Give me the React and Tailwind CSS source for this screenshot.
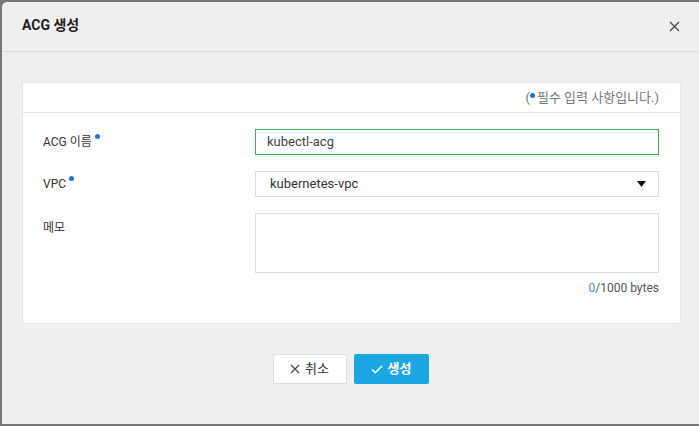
const Dot = () => (
  <span className="inline-block w-[5px] h-[5px] rounded-full bg-[#1f75cf] align-top mt-[1px] ml-[3px]" />
);

const App = () => {
  return (
    <div
      className="w-[699px] h-[426px] bg-[#777777] pt-[2px] pl-[2px] pb-[2px] overflow-hidden"
      style={{ fontFamily: 'Roboto, "Noto Sans CJK KR", sans-serif' }}
    >
      <div className="h-full bg-[#efefef] rounded-tl-[5px] flex flex-col">
        {/* header */}
        <div className="h-[50px] border-b border-[#dcdcdc] flex items-center justify-between pl-5 pr-[19px]">
          <h1 className="text-[14px] font-bold text-[#222] pb-[2px]">ACG 생성</h1>
          <button className="text-[#444]">
            <svg width="11" height="11" viewBox="0 0 11 11" stroke="currentColor" strokeWidth="1.3">
              <path d="M1 1L10 10M10 1L1 10" />
            </svg>
          </button>
        </div>

        {/* body */}
        <div className="pt-[30px] pl-5 pr-[18px]">
          <div className="bg-white border border-[#e6e6e6] rounded-[2px]">
            <div className="h-[30px] border-b border-[#e2e2e2] flex items-center justify-end pr-[21px] text-[13px] text-[#777]">
              (<span className="inline-block w-[5px] h-[5px] rounded-full bg-[#1f75cf] mr-[2px] -mt-[4px]" />필수 입력 사항입니다.)
            </div>

            <div className="pl-5 pr-[21px] pt-4 pb-[26px] flex flex-col gap-4 text-[12px] text-[#333]">
              <div className="flex items-center">
                <div className="w-[212px]">
                  ACG 이름<Dot />
                </div>
                <div className="flex-1 h-[26px] border border-[#3fb34f] flex items-center px-[11px] text-[13px] text-[#444]">
                  kubectl-acg
                </div>
              </div>

              <div className="flex items-center">
                <div className="w-[212px]">
                  VPC<Dot />
                </div>
                <div className="flex-1 h-[26px] border border-[#dedede] flex items-center justify-between pl-[14px] pr-[12px] text-[13px] text-[#333]">
                  <span>kubernetes-vpc</span>
                  <svg width="9" height="6" viewBox="0 0 9 6">
                    <path d="M0 0H9L4.5 6Z" fill="#111" />
                  </svg>
                </div>
              </div>

              <div className="flex items-start">
                <div className="w-[212px] pt-[6px]">메모</div>
                <div className="flex-1">
                  <div className="h-[60px] border border-[#dedede]" />
                  <div className="text-right text-[12px] text-[#555] mt-[6px]">
                    <span className="text-[#4a8fd8]">0</span>/1000 bytes
                  </div>
                </div>
              </div>
            </div>
          </div>
        </div>

        {/* footer */}
        <div className="flex justify-center gap-[7px] pt-[30px]">
          <button className="w-[74px] h-[30px] bg-white border border-[#e0e0e0] flex items-center justify-center gap-[5px] text-[13px] text-[#333]">
            <svg width="10" height="10" viewBox="0 0 10 10" stroke="#444" strokeWidth="1.1">
              <path d="M1 1L9 9M9 1L1 9" />
            </svg>
            취소
          </button>
          <button className="w-[75px] h-[30px] bg-[#1ca7e4] rounded-[2px] flex items-center justify-center gap-[5px] text-[13px] font-bold text-white">
            <svg width="12" height="9" viewBox="0 0 12 9" fill="none" stroke="white" strokeWidth="1.6">
              <path d="M1 4.5L4.3 7.7L11 1" />
            </svg>
            생성
          </button>
        </div>
      </div>
    </div>
  );
};

export default App;
